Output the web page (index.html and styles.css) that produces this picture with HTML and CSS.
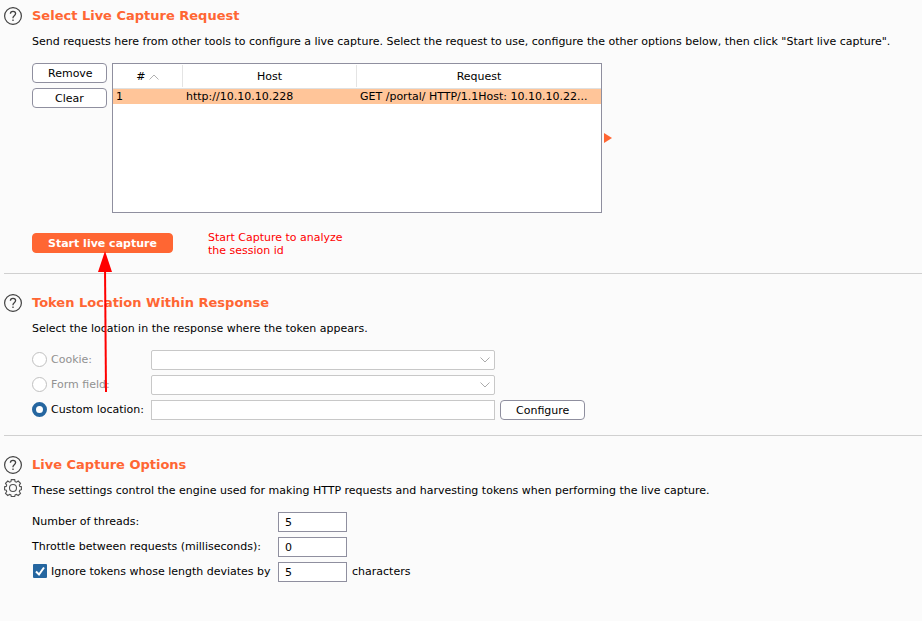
FILE: index.html
```html
<!DOCTYPE html>
<html lang="en">
<head>
<meta charset="utf-8">
<title>Live capture</title>
<link rel="stylesheet" href="styles.css">
</head>
<body>
<svg class="defs" aria-hidden="true">
  <symbol id="help" viewBox="0 0 18 18">
    <circle cx="9" cy="9" r="8.4" fill="none" stroke="#404040" stroke-width="1.2"/>
    <path d="M6.4 6.8C6.4 5.2 7.5 4.3 9 4.3S11.600 5.200 11.600 6.600C11.600 8.600 9 8.700 9 10.800V11.300M9 12.600V14" fill="none" stroke="#404040" stroke-width="1.3"/>
  </symbol>
</svg>
<main class="page">
  <section class="section first">
    <div class="icons">
      <button class="icon" type="button" aria-label="Help"><svg viewBox="0 0 18 18"><use href="#help"/></svg></button>
    </div>
    <div class="content">
      <h2>Select Live Capture Request</h2>
      <p class="description">Send requests here from other tools to configure a live capture. Select the request to use, configure the other options below, then click "Start live capture".</p>
      <div class="requests">
        <div class="actions">
          <button class="button" type="button">Remove</button>
          <button class="button" type="button">Clear</button>
        </div>
        <div class="table-box">
          <table>
            <colgroup><col class="col-number"><col class="col-host"><col></colgroup>
            <thead>
              <tr>
                <th scope="col"><span># <svg class="sort" viewBox="0 0 10 6" aria-hidden="true"><path d="M.5 5.500 5 1l4.500 4.500"/></svg></span></th>
                <th scope="col"><span>Host</span></th>
                <th scope="col"><span>Request</span></th>
              </tr>
            </thead>
            <tbody>
              <tr><td>1</td><td>http://10.10.10.228</td><td>GET /portal/ HTTP/1.1Host: 10.10.10.22...</td></tr>
            </tbody>
          </table>
        </div>
        <svg class="expand" viewBox="0 0 8 10" aria-hidden="true"><path d="M0 0 8 5 0 10z"/></svg>
      </div>
      <div class="start">
        <button class="button primary" type="button">Start live capture</button>
        <p class="note">Start Capture to analyze<br>the session id</p>
      </div>
    </div>
  </section>

  <section class="section">
    <div class="icons">
      <button class="icon" type="button" aria-label="Help"><svg viewBox="0 0 18 18"><use href="#help"/></svg></button>
    </div>
    <div class="content">
      <h2>Token Location Within Response</h2>
      <p class="description">Select the location in the response where the token appears.</p>
      <div class="location">
        <label class="choice off"><input type="radio" name="location" disabled>Cookie:</label>
        <select class="field" aria-label="Cookie" disabled></select>
        <label class="choice off"><input type="radio" name="location" disabled>Form field:</label>
        <select class="field" aria-label="Form field" disabled></select>
        <label class="choice"><input type="radio" name="location" checked>Custom location:</label>
        <input class="field" type="text" aria-label="Custom location">
        <button class="button" type="button">Configure</button>
      </div>
    </div>
  </section>

  <section class="section last">
    <div class="icons">
      <button class="icon" type="button" aria-label="Help"><svg viewBox="0 0 18 18"><use href="#help"/></svg></button>
      <button class="icon" type="button" aria-label="Settings"><svg viewBox="0 0 18 18" fill="none" stroke="#505050" stroke-width="1.1"><path d="M7.300.6h3.400l.4 2.100 1.300.5 1.800-1.200 2.300 2.300-1.200 1.800.5 1.300 1.600.3v3l-1.600.5-.5 1.300 1.200 1.800-2.300 2.200-1.800-1.100-1.300.5-.4 1.700H7.300l-.4-1.700-1.300-.5-1.800 1.100-2.300-2.200 1.200-1.800-.5-1.300-1.600-.4V7.700l1.600-.3.500-1.300-1.200-1.800L3.800 2l1.800 1.200 1.300-.5z"/><circle cx="9" cy="9" r="3.500"/></svg></button>
    </div>
    <div class="content">
      <h2>Live Capture Options</h2>
      <p class="description">These settings control the engine used for making HTTP requests and harvesting tokens when performing the live capture.</p>
      <div class="options">
        <label for="threads">Number of threads:</label>
        <input class="number" id="threads" type="text" value="5">
        <label for="throttle">Throttle between requests (milliseconds):</label>
        <input class="number" id="throttle" type="text" value="0">
        <label class="choice"><input type="checkbox" checked>Ignore tokens whose length deviates by</label>
        <input class="number" id="deviation" type="text" value="5">
        <label for="deviation">characters</label>
      </div>
    </div>
  </section>

  <svg class="arrow" viewBox="0 0 14 142" aria-hidden="true"><path d="M7 16 8 141" stroke="#f00" stroke-width="2"/><path d="M7 0 14 21H0z" fill="#f00"/></svg>
</main>
</body>
</html>
```
FILE: styles.css
```css
* {
  box-sizing: border-box;
}

body {
  margin: 0;
  background: #fbfbfb;
  color: #000;
  font: 11px/16px "DejaVu Sans", sans-serif;
}

button,
input,
select {
  margin: 0;
  font: inherit;
  color: inherit;
}

.defs {
  display: none;
}

.page {
  position: relative;
  padding-left: 4px;
}

.section {
  display: flex;
  gap: 10px;
  padding: 20px 0 15px;
  border-bottom: 1px solid #d0d0d0;
}

.first {
  padding: 7px 0 16px;
}

.last {
  border-bottom: 0;
}

.icons {
  display: flex;
  flex: none;
  flex-direction: column;
  gap: 5px;
}

.icon {
  width: 18px;
  height: 18px;
  padding: 0;
  border: 0;
  background: none;
}

.icon svg {
  display: block;
}

.content {
  flex: 1;
  min-width: 0;
}

h2 {
  margin: 0;
  color: #ff6633;
  font-size: 13px;
  line-height: 18px;
}

.description {
  margin: 9px 0 13px;
}

.requests {
  display: flex;
  gap: 5px;
}

.actions {
  display: flex;
  flex-direction: column;
  gap: 5px;
  width: 75px;
}

.button {
  height: 20px;
  padding: 1px 15px 0;
  border: 1px solid #8f8f9f;
  border-radius: 4px;
  background: #fff;
  line-height: 17px;
}

.primary {
  border-color: #ff6633;
  background: #ff6633;
  color: #fff;
  font-weight: bold;
}

.table-box {
  width: 490px;
  height: 150px;
  border: 1px solid #8f8f9f;
  background: #fff;
}

table {
  width: 100%;
  border-collapse: collapse;
  table-layout: fixed;
}

.col-number {
  width: 70px;
}

.col-host {
  width: 174px;
}

th {
  height: 24px;
  padding: 1px 0;
  border-bottom: 1px solid #e0e0e0;
  font-weight: normal;
}

th span {
  display: block;
  padding-top: 1px;
  line-height: 21px;
  border-right: 1px solid #e4e4e4;
}

th:last-child span {
  border-right: 0;
}

td {
  padding: 0 3px;
  background: #ffc599;
  line-height: 15px;
  white-space: nowrap;
}

.sort {
  width: 10px;
  height: 6px;
  fill: none;
  stroke: #b0b0b0;
}

.expand {
  align-self: center;
  width: 8px;
  height: 10px;
  margin-left: -3px;
  fill: #ff6633;
}

.start {
  display: flex;
  align-items: flex-start;
  gap: 35px;
  margin-top: 20px;
}

.note {
  margin: -2px 0 0;
  color: #f00;
  line-height: 13px;
}

.location {
  display: grid;
  grid-template-columns: 114px 344px auto;
  justify-content: start;
  gap: 5px;
}

.location select {
  grid-column: 2 / 4;
  width: 344px;
}

.choice {
  display: flex;
  align-items: center;
  gap: 4px;
  height: 20px;
  white-space: nowrap;
}

.off {
  color: #919191;
}

.choice input {
  flex: none;
  appearance: none;
  width: 15px;
  height: 15px;
  margin-bottom: 2px;
  border: 1px solid #c0c0c0;
  border-radius: 50%;
  background: #fff;
}

.choice input[type="radio"]:checked {
  border: 4px solid #2566a0;
}

.choice input[type="checkbox"] {
  width: 14px;
  height: 14px;
  margin-left: 1px;
  border: 0;
  border-radius: 1px;
  background: #2566a0 url("data:image/svg+xml,%3Csvg xmlns='http://www.w3.org/2000/svg' viewBox='0 0 14 14'%3E%3Cpath d='M3 7.500l3 3 5-7' fill='none' stroke='white' stroke-width='2'/%3E%3C/svg%3E");
}

.field {
  height: 20px;
  padding: 0 6px;
  border: 1px solid #c8c8c8;
  background: #fff;
}

select.field {
  appearance: none;
  border-radius: 2px;
  opacity: 1;
  background: #fff url("data:image/svg+xml,%3Csvg xmlns='http://www.w3.org/2000/svg' viewBox='0 0 10 6'%3E%3Cpath d='M.5.500 5 5 9.500.5' fill='none' stroke='%23ababab'/%3E%3C/svg%3E") no-repeat right 4px center / 10px 6px;
}

.options {
  display: grid;
  grid-template-columns: 241px 69px auto;
  justify-content: start;
  align-items: center;
  gap: 5px;
}

.options > label {
  grid-column: 1;
}

.options > label:last-child {
  grid-column: 3;
}

.number {
  width: 100%;
  height: 20px;
  padding: 0 6px;
  border: 1px solid #8f8f9f;
  background: #fff;
}

.arrow {
  position: absolute;
  top: 251px;
  left: 98px;
  width: 14px;
  height: 142px;
}
```
